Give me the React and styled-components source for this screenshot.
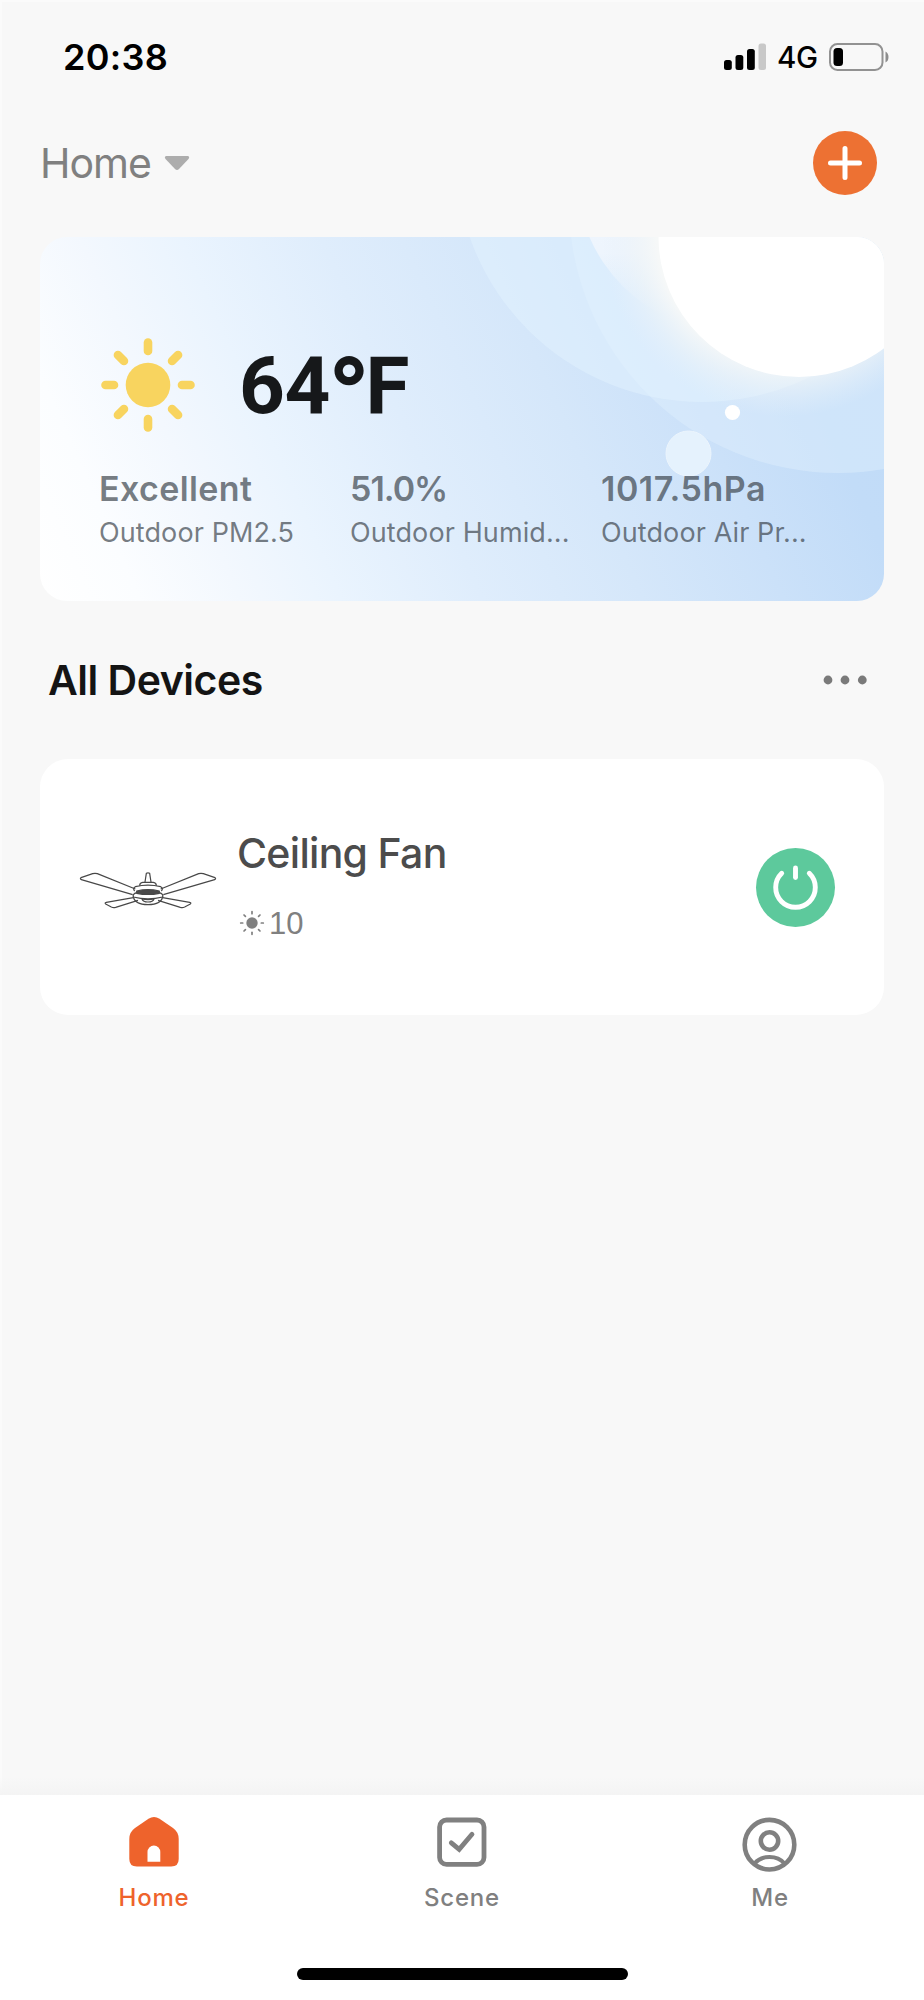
import React from "react";
import styled, { createGlobalStyle } from "styled-components";

const GlobalStyle = createGlobalStyle`
* { box-sizing: border-box; }
body {
    margin: 0;
    background: #f8f8f8;
    font-family: Inter, "Liberation Sans", sans-serif;
}
`;

const Screen = styled.div`
width: 924px;
height: 2000px;
display: flex;
flex-direction: column;
overflow: hidden;
background: #f8f8f8;
box-shadow: inset 2px 2px 0 #fbfbfb;
`;

const Text = styled.span`
display: block;
white-space: nowrap;
line-height: 1.2;
font-size: ${(p) => p.$size}px;
font-weight: ${(p) => p.$weight || 400};
letter-spacing: ${(p) => p.$spacing || 0}px;
color: ${(p) => p.$color || "#000"};
`;

const StatusBar = styled.div`
height: 114px;
display: flex;
align-items: center;
justify-content: space-between;
padding: 0 35px 0 63px;
`;

const Clock = styled(Text)`
margin-top: 2px;
`;

const StatusIcons = styled.div`
display: flex;
align-items: center;
`;

const Network = styled(Text)`
width: 41px;
margin: 2px 11px 0 10px;
`;

const Header = styled.div`
height: 98px;
display: flex;
align-items: center;
justify-content: space-between;
padding: 0 47px 0 40px;
`;

const HomePicker = styled.div`
display: flex;
align-items: center;
gap: 13px;
`;

const HomeName = styled(Text)`
margin-top: 2px;
`;

const AddButton = styled.button`
width: 64px;
height: 64px;
padding: 0;
border: none;
border-radius: 50%;
background: #ed7133;
display: flex;
align-items: center;
justify-content: center;
`;

const WeatherCard = styled.div`
position: relative;
overflow: hidden;
width: 844px;
height: 364px;
flex: none;
margin: 25px 0 0 40px;
border-radius: 27px;
background: linear-gradient(66deg, #fff 0%, #fbfdff 10%, #f3f8fe 20%, #eaf4fe 30%, #dfedfc 44%, #d5e7fa 60%, #cbe1f9 74%, #c2dcf8 86%, #c0dbf8 100%);
`;

const WeatherArt = styled.svg`
position: absolute;
inset: 0;
`;

const WeatherContent = styled.div`
position: relative;
padding: 98px 0 0 59px;
`;

const Temperature = styled.div`
height: 100px;
display: flex;
align-items: center;
gap: 42px;
`;

const Degrees = styled(Text)`
margin-top: 2px;
font-family: Roboto, sans-serif;
`;

/* wider, heavier ring than the one in the digits' font */
const DegreeSign = styled.span`
font-family: Inter, sans-serif;
font-size: 84px;
line-height: 0;
letter-spacing: -3px;
vertical-align: -5px;
`;

const Metrics = styled.div`
display: grid;
grid-template-columns: 251px 251px 240px;
margin-top: 32px;
`;

const MetricValue = styled(Text)`
line-height: 43px;
`;

const MetricLabel = styled(Text)`
line-height: 45px;
`;

const SectionHeader = styled.div`
height: 158px;
display: flex;
align-items: center;
justify-content: space-between;
padding: 0 57px 0 48px;
`;

const SectionTitle = styled(Text)`
margin-top: 2px;
`;

const DeviceCard = styled.div`
width: 844px;
height: 256px;
flex: none;
margin-left: 40px;
padding: 0 49px 0 30px;
border-radius: 28px;
background: #fff;
display: flex;
align-items: center;
`;

const DeviceInfo = styled.div`
flex: 1;
margin: -4px 0 0 7px;
`;

const DeviceState = styled.div`
display: flex;
align-items: center;
gap: 4px;
height: 36px;
margin: 27px 0 0 2px;
`;

const Level = styled(Text)`
font-family: "Liberation Sans", sans-serif;
`;

const FanDrawing = styled.svg`
margin-top: 6px;
`;

const PowerButton = styled.button`
width: 79px;
height: 79px;
padding: 0;
border: none;
border-radius: 50%;
background: #5dc99c;
display: flex;
`;

const Fade = styled.div`
flex: 1;
display: flex;
background: linear-gradient(to top, #f4f4f4, rgba(248, 248, 248, 0) 18px);
`;

const TabBar = styled.div`
height: 205px;
flex: none;
background: #fff;
`;

const Tabs = styled.div`
height: 173px;
display: grid;
grid-template-columns: repeat(3, 1fr);
`;

const Tab = styled.div`
display: flex;
flex-direction: column;
align-items: center;
padding-top: 19px;
color: ${(p) => (p.$active ? "#ee632c" : "#808080")};
`;

const TabLabel = styled(Text)`
margin-top: 12px;
line-height: 32px;
color: inherit;
`;

const HomeIndicator = styled.div`
width: 331px;
height: 12px;
margin-left: 297px;
border-radius: 6px;
background: #000;
`;

const Signal = () => (
    <svg width="43" height="28" viewBox="0 0 43 28">
        <rect x="0" y="17" width="7.8" height="10" rx="2.5" />
        <rect x="11.5" y="12" width="7.8" height="15" rx="2.5" />
        <rect x="23" y="6" width="7.8" height="21" rx="2.5" />
        <rect x="34.5" y="0.5" width="7.5" height="26.5" rx="2.5" fill="#c8c8c8" />
    </svg>
);

const Battery = () => (
    <svg width="60" height="28" viewBox="0 0 60 28">
        <rect x="1" y="1" width="52.5" height="26" rx="7.5" fill="none" stroke="#929292" strokeWidth="2" />
        <rect x="4.5" y="5" width="9.5" height="18" rx="3.5" />
        <path d="M56.5 8.5 Q59.5 10 59.5 14 Q59.5 18 56.5 19.5 Z" fill="#8c8c8c" />
    </svg>
);

const rays = [0, 45, 90, 135, 180, 225, 270, 315];

const Sun = () => (
    <svg width="98" height="98" viewBox="-49 -49 98 98">
        <circle r="22.3" fill="#f8d45f" />
        {rays.map((a) => (
            <path key={a} d="M0 -42.5 V-34" transform={`rotate(${a})`} stroke="#f8d45f" strokeWidth="8.6" strokeLinecap="round" />
        ))}
    </svg>
);

const Brightness = () => (
    <svg width="26" height="26" viewBox="-13 -13 26 26">
        <circle r="5.7" fill="#808080" />
        {rays.map((a) => (
            <path key={a} d="M0 -11.3 V-9.3" transform={`rotate(${a})`} stroke="#808080" strokeWidth="1.7" strokeLinecap="round" />
        ))}
    </svg>
);

const Sky = () => (
    <WeatherArt width="844" height="364" viewBox="40 237 844 364">
        <defs>
            <radialGradient id="glow" gradientUnits="userSpaceOnUse" cx="784" cy="235" r="182">
                <stop offset="0.7" stopColor="#f6f8f8" />
                <stop offset="0.82" stopColor="#eff4f7" stopOpacity="0.6" />
                <stop offset="1" stopColor="#e4effa" stopOpacity="0" />
            </radialGradient>
            <linearGradient id="halo" x1="0" y1="0" x2="0" y2="1">
                <stop offset="0.4" stopColor="#f0f6fe" />
                <stop offset="0.75" stopColor="#eef5fd" />
                <stop offset="0.95" stopColor="#e9f3fc" stopOpacity="0" />
            </linearGradient>
        </defs>
        <circle cx="838" cy="204" r="269" fill="#e0effc" fillOpacity="0.45" />
        <circle cx="702" cy="156" r="246" fill="#e5f3fe" fillOpacity="0.45" />
        <circle cx="736" cy="173" r="160" fill="url(#halo)" />
        <circle cx="784" cy="235" r="182" fill="url(#glow)" />
        <circle cx="799" cy="236.5" r="140.5" fill="#fff" />
        <circle cx="732.5" cy="412.5" r="7.6" fill="#fff" />
        <circle cx="688.5" cy="453.5" r="22.5" fill="#e5f2fd" stroke="#ecf5fd" />
    </WeatherArt>
);

const CeilingFan = () => (
    <FanDrawing width="160" height="80" viewBox="0 0 480 240" fill="none" stroke="#484848" strokeWidth="3.6" strokeLinejoin="round">
        <path d="M196 117 L82 71 Q75 69 68 71 L33 83 Q29 86 34 89 L188 134" />
        <path d="M272 117 L386 71 Q393 69 400 71 L435 83 Q439 86 434 89 L280 134" />
        <path d="M190 143 L109 157 Q103 159 107 162 L124 171 Q130 174 137 172 L204 151" />
        <path d="M278 143 L359 157 Q365 159 361 162 L344 171 Q338 174 331 172 L264 151" />
        <path d="M225 96 L229 70 Q234 67 239 70 L243 96" />
        <path d="M209 107 Q209 98 218 97 H250 Q259 98 259 107" />
        <path d="M194 123 Q187 115 196 110 Q234 101 272 110 Q281 115 274 123" />
        <path d="M200 123 Q234 115 268 123 V130 Q234 137 200 130 Z" fill="#4a4a4a" />
        <path d="M200 128 Q187 132 190 141 Q234 152 278 141 Q281 132 268 128" />
        <path d="M190 139 Q193 163 234 164 Q275 163 278 139" />
        <path d="M216 147 Q219 156 234 156 Q249 156 252 147 Q234 151 216 147 Z" />
    </FanDrawing>
);

const Power = () => (
    <svg width="79" height="79" viewBox="-39.5 -39.5 79 79" fill="none" stroke="#fff" strokeWidth="4.9" strokeLinecap="round">
        <path d="M-13.8 -14.2 A19.8 19.8 0 1 0 13.8 -14.2" />
        <path d="M0 -19.5 V-10" />
    </svg>
);

const HomeIcon = () => (
    <svg width="56" height="56" viewBox="0 0 56 56">
        <path d="M22.5 4.8 Q28 1.4 33.5 4.8 L47 14 Q52.7 18 52.7 25 V45 Q52.7 52.5 45.2 52.5 H10.8 Q3.3 52.5 3.3 45 V25 Q3.3 18 9 14 Z" fill="#ee632c" />
        <path d="M21.5 47.7 V38 A6.4 6.4 0 0 1 34.3 38 V47.7 Z" fill="#fff" />
    </svg>
);

const SceneIcon = () => (
    <svg width="56" height="56" viewBox="0 0 56 56" fill="none" stroke="#808080" strokeWidth="4.8">
        <rect x="5.6" y="6" width="44.4" height="44.4" rx="7" />
        <path d="M17.3 28.8 L25.2 35.3 L38 20.3" strokeLinecap="round" />
    </svg>
);

const MeIcon = () => (
    <svg width="56" height="56" viewBox="0 0 56 56" overflow="visible" fill="none" stroke="#808080" strokeWidth="4.6">
        <circle cx="27.5" cy="30.7" r="24.8" />
        <circle cx="27.5" cy="27" r="8.7" />
        <path d="M12.5 49.5 Q18 43 27.5 43 Q37 43 42.5 49.5" strokeWidth="4.2" />
    </svg>
);

const metrics = [
    { value: "Excellent", label: "Outdoor PM2.5", spacing: 0.4 },
    { value: "51.0%", label: "Outdoor Humid...", spacing: -1 },
    { value: "1017.5hPa", label: "Outdoor Air Pr...", spacing: 0.5 },
];

const tabs = [
    { label: "Home", Icon: HomeIcon, active: true },
    { label: "Scene", Icon: SceneIcon },
    { label: "Me", Icon: MeIcon },
];

function App() {
    return (
        <Screen>
            <GlobalStyle />
            <StatusBar>
                <Clock $size={36} $weight={600} $spacing={0.3}>20:38</Clock>
                <StatusIcons>
                    <Signal />
                    <Network $size={29.5} $weight={500} $spacing={-0.4}>4G</Network>
                    <Battery />
                </StatusIcons>
            </StatusBar>

            <Header>
                <HomePicker>
                    <HomeName $size={41} $spacing={-1} $color="#808080">Home</HomeName>
                    <svg width="26" height="16" viewBox="0 0 26 16">
                        <path d="M2 1 H24 Q26 2 24.5 4 L15 14 Q13 16 11 14 L1.5 4 Q0 2 2 1 Z" fill="#adadad" />
                    </svg>
                </HomePicker>
                <AddButton>
                    <svg width="36" height="36" viewBox="0 0 36 36" stroke="#fff" strokeWidth="5" strokeLinecap="round">
                        <path d="M3.5 18 H32.5 M18 3.5 V32.5" />
                    </svg>
                </AddButton>
            </Header>

            <WeatherCard>
                <Sky />
                <WeatherContent>
                    <Temperature>
                        <Sun />
                        <Degrees $size={80} $weight={700} $spacing={-0.5} $color="#16181a">64<DegreeSign>°</DegreeSign>F</Degrees>
                    </Temperature>
                    <Metrics>
                        {metrics.map((m) => (
                            <div key={m.label}>
                                <MetricValue $size={34} $weight={600} $spacing={m.spacing} $color="rgba(60, 68, 76, 0.7)">{m.value}</MetricValue>
                                <MetricLabel $size={27} $spacing={0.1} $color="rgba(60, 68, 76, 0.7)">{m.label}</MetricLabel>
                            </div>
                        ))}
                    </Metrics>
                </WeatherContent>
            </WeatherCard>

            <SectionHeader>
                <SectionTitle $size={41} $weight={600} $spacing={-0.5} $color="#141414">All Devices</SectionTitle>
                <svg width="44" height="10" viewBox="0 0 44 10" fill="#7a7a7a">
                    <circle cx="5" cy="5" r="4.4" />
                    <circle cx="22" cy="5" r="4.4" />
                    <circle cx="39.3" cy="5" r="4.4" />
                </svg>
            </SectionHeader>

            <DeviceCard>
                <CeilingFan />
                <DeviceInfo>
                    <Text $size={41} $weight={500} $spacing={-0.7} $color="#4c4c4c">Ceiling Fan</Text>
                    <DeviceState>
                        <Brightness />
                        <Level $size={31} $color="#808080">10</Level>
                    </DeviceState>
                </DeviceInfo>
                <PowerButton>
                    <Power />
                </PowerButton>
            </DeviceCard>

            <Fade />

            <TabBar>
                <Tabs>
                    {tabs.map(({ label, Icon, active }) => (
                        <Tab key={label} $active={active}>
                            <Icon />
                            <TabLabel $size={24} $weight={500} $spacing={0.8}>{label}</TabLabel>
                        </Tab>
                    ))}
                </Tabs>
                <HomeIndicator />
            </TabBar>
        </Screen>
    );
}

export default App;
